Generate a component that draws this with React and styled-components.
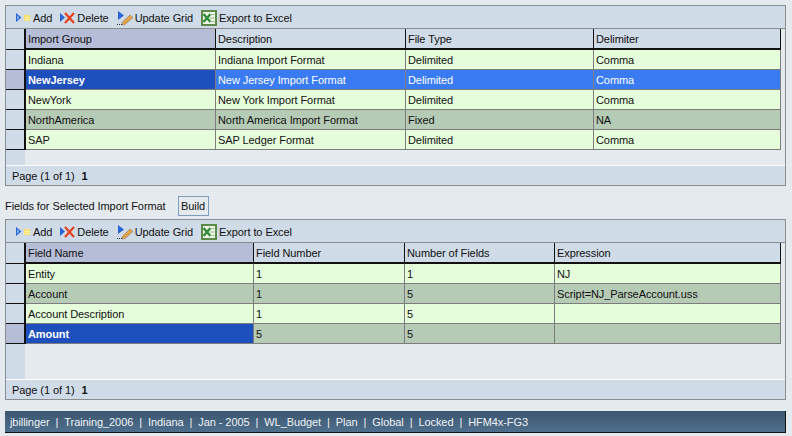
import styled, { createGlobalStyle } from "styled-components";

const Global = createGlobalStyle`
  html, body { margin: 0; padding: 0; background: #e5eaee; }
  body { font-family: "Liberation Sans", Arial, sans-serif; font-size: 11px; letter-spacing: -0.08px; color: #111; overflow: hidden; }
`;

const Page = styled.div`
  width: 792px;
  height: 436px;
  padding: 5px 5px 0 5px;
  box-sizing: border-box;
  display: flex;
  flex-direction: column;
`;

const Panel = styled.div`
  width: 781px;
  height: 181px;
  box-sizing: border-box;
  border: 1px solid #8a8d90;
  background: #e5eaee;
  display: flex;
  flex-direction: column;
  flex: none;
`;

const Toolbar = styled.div`
  height: 23px;
  flex: none;
  box-sizing: border-box;
  background: #cfdbe7;
  border-bottom: 1px solid #8a8d90;
  display: flex;
  align-items: center;
  padding: 1px 0 0 10px;
  gap: 8px;
`;

const ToolButton = styled.div`
  display: flex;
  align-items: center;
  gap: 2px;
  white-space: nowrap;
`;

const Grid = styled.div`
  flex: 1;
  display: flex;
  flex-direction: column;
  background: linear-gradient(to right, #cfdbe7 19px, #e5eaee 19px);
`;

const Row = styled.div`
  display: grid;
  grid-template-columns: ${(p) => p.$cols};
  width: 775px;
  height: ${(p) => (p.$head ? 21 : 20)}px;
  flex: none;
`;

const Selector = styled.div`
  box-sizing: border-box;
  background: ${(p) => (p.$active ? "#b6bdd7" : "#cfdbe7")};
  border-right: 2px solid #111;
  border-bottom: 1px solid #111;
`;

const HeadCell = styled.div`
  box-sizing: border-box;
  background: ${(p) => (p.$sorted ? "#b6bdd7" : "#cfdbe7")};
  border-right: 1px solid #111;
  border-bottom: 2px solid #111;
  padding-left: 2px;
  line-height: 21px;
  white-space: nowrap;
  overflow: hidden;
`;

const cellColors = {
  light: ["#e6fddc", "#111"],
  dark: ["#b6cbb6", "#111"],
  selected: ["#3a7bf2", "#fff"],
  current: ["#1d4fbd", "#fff"],
};

const Cell = styled.div`
  box-sizing: border-box;
  background: ${(p) => cellColors[p.$tone][0]};
  color: ${(p) => cellColors[p.$tone][1]};
  font-weight: ${(p) => (p.$tone === "current" ? 700 : 400)};
  border-right: 1px solid #7d7d7d;
  border-bottom: 1px solid #7d7d7d;
  padding-left: 2px;
  line-height: 21px;
  white-space: nowrap;
  overflow: hidden;
`;

const Pager = styled.div`
  height: 20px;
  flex: none;
  box-sizing: border-box;
  background: #cfdbe7;
  border-top: 1px solid #fff;
  padding-left: 6px;
  line-height: 21px;
  b { margin-left: 4px; }
`;

const FieldsBar = styled.div`
  height: 33px;
  flex: none;
  box-sizing: border-box;
  display: flex;
  align-items: center;
  padding-top: 7px;
  gap: 12px;
`;

const BuildButton = styled.div`
  width: 31px;
  height: 20px;
  box-sizing: border-box;
  border: 1px solid #7f9db9;
  background: #e5eaee;
  display: flex;
  align-items: center;
  justify-content: center;
`;

const StatusBar = styled.div`
  width: 781px;
  height: 22px;
  margin-top: 11px;
  flex: none;
  box-sizing: border-box;
  background: linear-gradient(to bottom, #3b5670, #4f6f8c);
  border-right: 1px solid #111;
  border-bottom: 1px solid #111;
  color: #eef2f6;
  display: flex;
  align-items: center;
  gap: 6px;
  padding-left: 5px;
  white-space: pre;
`;

const Separator = styled.span`
  margin-right: 6px;
`;

const AddIcon = () => (
  <svg width="15" height="16" viewBox="0 0 15 16">
    <path d="M0 3 L5.5 7.5 L0 12 Z" fill="#2a63d4" />
    <path d="M1 5 L3.5 7.5 L1 10 Z" fill="#7fb0f0" />
    <rect x="8" y="5" width="6" height="6" fill="#f5d94e" />
    <path d="M8 7.5 h6 M8 9.5 h6 M10 5 v6 M12 5 v6" stroke="#fbf3c0" strokeWidth="0.7" />
  </svg>
);

const DeleteIcon = () => (
  <svg width="15" height="16" viewBox="0 0 15 16">
    <path d="M0 3 L5 7.5 L0 12 Z" fill="#2a63d4" />
    <path d="M5 3 L14 13 M14 3 L5 13" stroke="#e6401f" strokeWidth="2.2" fill="none" />
  </svg>
);

const UpdateIcon = () => (
  <svg width="16" height="18" viewBox="0 0 16 18">
    <path d="M1 2 L7 6.5 L1 11 Z" fill="#2a63d4" />
    <path d="M5.5 13 L13 6 L16 8.5 L8 15.5 L5 16 Z" fill="#e3a24a" stroke="#8a7a58" strokeWidth="0.6" />
    <path d="M0 15.5 h1 M2 15.5 h1 M4 15.5 h1" stroke="#333" strokeWidth="1" />
  </svg>
);

const ExcelIcon = () => (
  <svg width="16" height="16" viewBox="0 0 16 16">
    <rect x="1" y="1" width="14" height="14" fill="#eef5e4" stroke="#5d8a48" strokeWidth="2" />
    <path d="M2.5 4 L9.5 12 M9.5 4 L2.5 12" stroke="#2f8a3a" strokeWidth="2.4" />
    <path d="M9 4.5 h4.5 M9 8 h4.5 M9 11.5 h4.5" stroke="#8fc08a" strokeWidth="1" />
  </svg>
);

const Tools = () => (
  <Toolbar>
    <ToolButton><AddIcon />Add</ToolButton>
    <ToolButton><DeleteIcon />Delete</ToolButton>
    <ToolButton><UpdateIcon />Update Grid</ToolButton>
    <ToolButton><ExcelIcon />Export to Excel</ToolButton>
  </Toolbar>
);

const DataGrid = ({ cols, head, rows, activeRow }) => (
  <Grid>
    <Row $cols={cols} $head>
      <Selector />
      {head.map((h, i) => (
        <HeadCell key={h} $sorted={i === 0}>{h}</HeadCell>
      ))}
    </Row>
    {rows.map((r, i) => (
      <Row key={r.cells[0]} $cols={cols}>
        <Selector $active={i === activeRow} />
        {r.cells.map((c, j) => (
          <Cell key={j} $tone={r.tones ? r.tones[j] : r.tone}>{c}</Cell>
        ))}
      </Row>
    ))}
  </Grid>
);

const importCols = "20px 190px 190px 188px 187px";
const fieldCols = "20px 228px 151px 150px 226px";

const importRows = [
  { tone: "light", cells: ["Indiana", "Indiana Import Format", "Delimited", "Comma"] },
  { tones: ["current", "selected", "selected", "selected"], cells: ["NewJersey", "New Jersey Import Format", "Delimited", "Comma"] },
  { tone: "light", cells: ["NewYork", "New York Import Format", "Delimited", "Comma"] },
  { tone: "dark", cells: ["NorthAmerica", "North America Import Format", "Fixed", "NA"] },
  { tone: "light", cells: ["SAP", "SAP Ledger Format", "Delimited", "Comma"] },
];

const fieldRows = [
  { tone: "light", cells: ["Entity", "1", "1", "NJ"] },
  { tone: "dark", cells: ["Account", "1", "5", "Script=NJ_ParseAccount.uss"] },
  { tone: "light", cells: ["Account Description", "1", "5", ""] },
  { tones: ["current", "dark", "dark", "dark"], cells: ["Amount", "5", "5", ""] },
];

const status = ["jbillinger", "Training_2006", "Indiana", "Jan - 2005", "WL_Budget", "Plan", "Global", "Locked", "HFM4x-FG3"];

const App = () => (
  <Page>
    <Global />
    <Panel>
      <Tools />
      <DataGrid cols={importCols} head={["Import Group", "Description", "File Type", "Delimiter"]} rows={importRows} activeRow={1} />
      <Pager>Page (1 of 1) <b>1</b></Pager>
    </Panel>
    <FieldsBar>
      Fields for Selected Import Format
      <BuildButton>Build</BuildButton>
    </FieldsBar>
    <Panel>
      <Tools />
      <DataGrid cols={fieldCols} head={["Field Name", "Field Number", "Number of Fields", "Expression"]} rows={fieldRows} activeRow={3} />
      <Pager>Page (1 of 1) <b>1</b></Pager>
    </Panel>
    <StatusBar>
      {status.map((s, i) => (
        <span key={s}>{i > 0 && <Separator>|</Separator>}{s}</span>
      ))}
    </StatusBar>
  </Page>
);

export default App;
